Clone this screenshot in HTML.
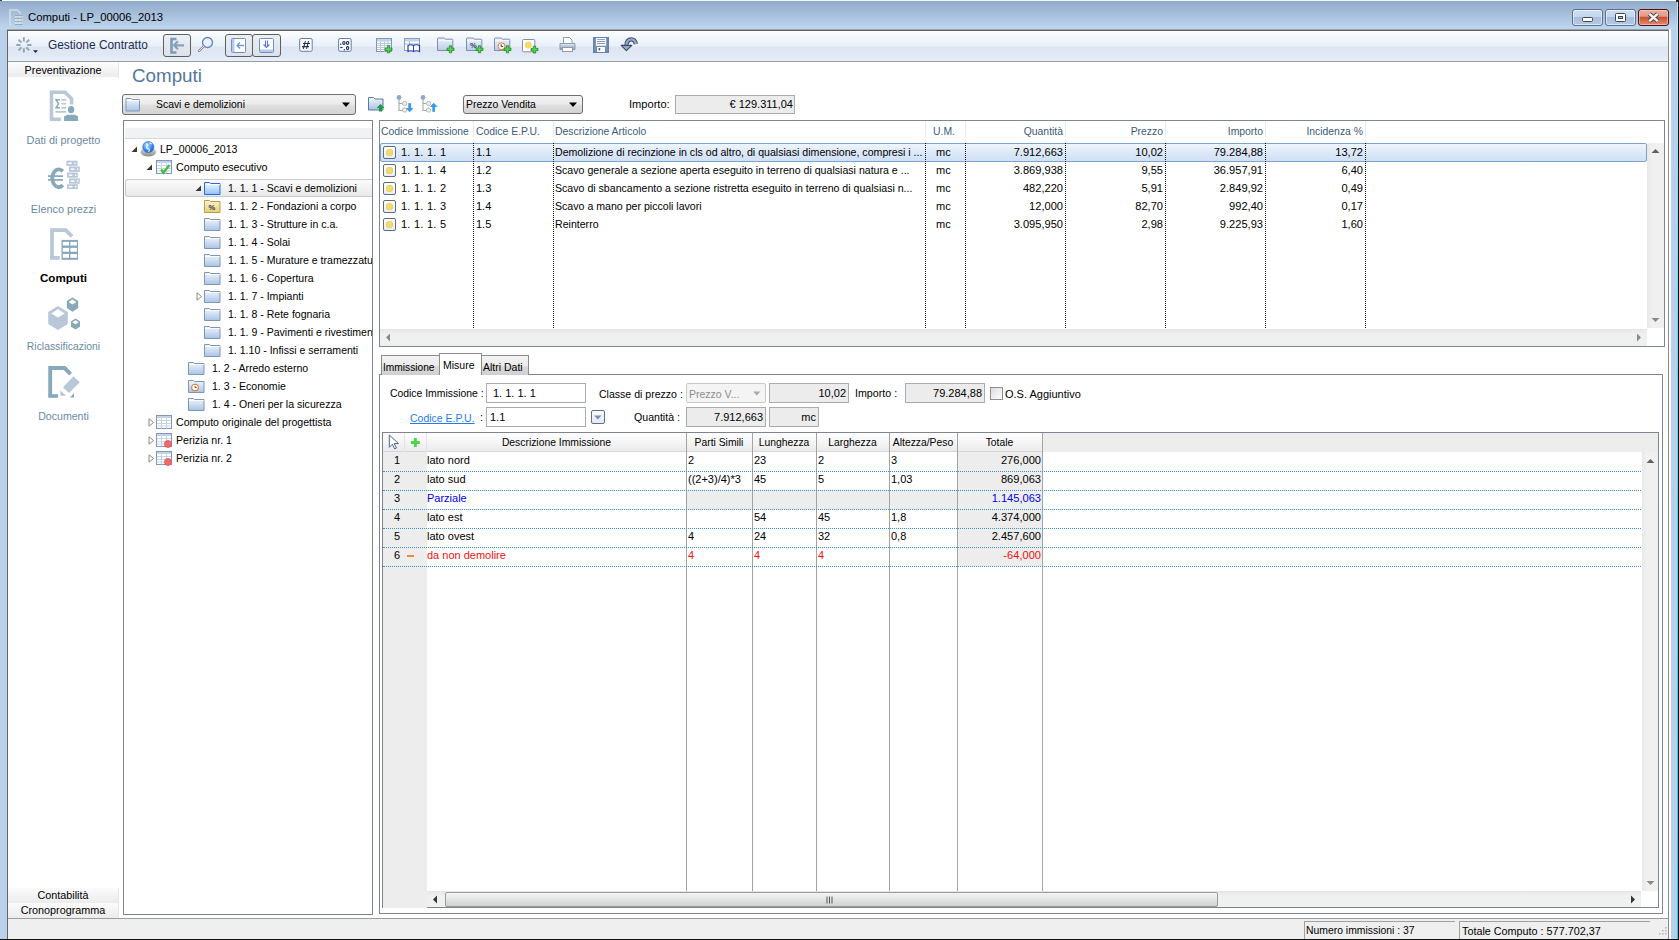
<!DOCTYPE html>
<html><head><meta charset="utf-8">
<style>
*{margin:0;padding:0;box-sizing:border-box}
html,body{width:1679px;height:940px;overflow:hidden;background:#b9d1ea;font-family:"Liberation Sans",sans-serif;font-size:10.5px;color:#000}
.a{position:absolute}
.t{position:absolute;white-space:nowrap;line-height:14px}
svg{position:absolute;overflow:visible}
#title{left:0;top:0;width:1679px;height:30px;background:linear-gradient(#f4f6f8 0,#f4f6f8 1px,#8eaaca 1px,#98b2cf 6px,#a6bfda 14px,#b4cbe5 22px,#bed5ee 28px)}
#client{left:7px;top:29px;width:1662px;height:910px;background:#fff;border-left:1px solid #666;border-top:2px solid #626262;border-right:1px solid #8c8c8c}
#toolbar{left:8px;top:31px;width:1660px;height:31px;background:linear-gradient(#fdfeff 0,#f1f6fc 8px,#eaf0f9 15px,#dde6f2 16px,#dfe8f3 24px,#e7eff9 29px);border-bottom:1px solid #9c9c9c}
.tbtn{position:absolute;top:34px;height:23px;border:1px solid #5c5f63;border-radius:3px;background:linear-gradient(#eceff3,#dde2e8)}
.navhdr{position:absolute;left:8px;width:110px;height:14px;background:linear-gradient(#fbfbfb,#ececec);text-align:center;line-height:14px;font-size:10.8px}
.navlbl{position:absolute;left:8px;width:111px;text-align:center;color:#6c8aa2;font-size:10.9px;line-height:14px}
.panel{position:absolute;border:1px solid #7f858d;background:#fff}
.hd{color:#405a78}
.dv{position:absolute;width:1px;border-left:1px dotted #111}
.ic{position:absolute;width:13px;height:13px;border:1px solid #5a6b82;border-radius:2px;background:linear-gradient(#fff,#e9edf2)}
.ic:after{content:"";position:absolute;left:2px;top:2px;width:7px;height:7px;border-radius:50%;background:#f0dc6e;box-shadow:0 0 0 0.6px #e6cc55 inset}
.fld{position:absolute;border:1px solid #a9abae;background:#ececec;text-align:right;padding-right:2px;line-height:19px;font-size:11px}
.inp{position:absolute;border:1px solid #a9abae;background:#fff;line-height:17px;font-size:11px}
.gl{position:absolute;width:1px;background:#a3a3a3}
.dl{position:absolute;height:1px;border-top:1px dotted #3a8fd9}
.gc{position:absolute;background:#ededed}
.r{text-align:right}
</style></head><body>
<div id="title" class="a"></div>
<!-- title icon -->
<svg style="left:9px;top:9px" width="16" height="17" viewBox="0 0 16 17"><path d="M1 15.5V1h7.5l3.5 3.5" fill="none" stroke="#d3dbe5" stroke-width="1.7"/><path d="M0.2 14.7h2.3v1.8H0.2z" fill="#d3dbe5"/><rect x="6" y="5.6" width="7.8" height="10" fill="#d9e3ec"/><path d="M6 6.4h7.8M6 9.4h7.8M6 12.5h7.8M6 15.5h7.8" stroke="#90aab7" stroke-width="1.1"/><path d="M9 7v8M12.5 7v8" stroke="#b5c8d4" stroke-width="0.8"/></svg>
<div class="t" style="left:28px;top:10px;font-size:11.3px;color:#000">Computi - LP_00006_2013</div>
<!-- title buttons -->
<div class="a" style="left:1572px;top:9px;width:31px;height:17px;border:1px solid #5c7090;border-radius:3px;background:linear-gradient(#cddff2 0,#c3d6ec 44%,#a7bfdc 50%,#b3cae4 100%);box-shadow:inset 0 0 0 1px rgba(255,255,255,0.55)"></div>
<div class="a" style="left:1582px;top:17px;width:11px;height:5px;background:#fff;border:1px solid #3f4650;border-radius:1.5px"></div>
<div class="a" style="left:1605px;top:9px;width:31px;height:17px;border:1px solid #5c7090;border-radius:3px;background:linear-gradient(#cddff2 0,#c3d6ec 44%,#a7bfdc 50%,#b3cae4 100%);box-shadow:inset 0 0 0 1px rgba(255,255,255,0.55)"></div>
<div class="a" style="left:1615px;top:13px;width:11px;height:9px;background:#fff;border:1px solid #3f4650;border-radius:1.5px"></div>
<div class="a" style="left:1618px;top:16px;width:5px;height:3px;background:#a9c4e2;border:1px solid #3f4650"></div>
<div class="a" style="left:1638px;top:9px;width:31px;height:17px;border:1px solid #4a1418;border-radius:3px;background:linear-gradient(#eeb0a0 0,#e39884 42%,#c65230 48%,#d0603f 62%,#e38e78 100%);box-shadow:inset 0 0 0 1px rgba(255,220,210,0.5)"></div>
<svg style="left:1647px;top:12px" width="13" height="11" viewBox="0 0 13 11"><path d="M2.3 1.8L10.7 9.2M10.7 1.8L2.3 9.2" stroke="#4a4a55" stroke-width="4.2"/><path d="M2.3 1.8L10.7 9.2M10.7 1.8L2.3 9.2" stroke="#f4f4f4" stroke-width="2.4"/></svg>

<div id="client" class="a"></div>
<div class="a" style="left:7px;top:29px;width:1662px;height:1px;background:#98a4b2"></div>
<div class="a" style="left:1669px;top:29px;width:2px;height:910px;background:#fff"></div>
<div class="a" style="left:1671px;top:29px;width:6px;height:910px;background:#b8d0e9"></div>
<div class="a" style="left:1677px;top:2px;width:1px;height:937px;background:linear-gradient(#c7e6f7,#5fd3f5 40%,#2fc6f2)"></div>
<div class="a" style="left:1678px;top:2px;width:1px;height:938px;background:#111"></div>
<div class="a" style="left:1676px;top:0;width:3px;height:2px;background:#222"></div>
<div class="a" style="left:0;top:0;width:2px;height:1px;background:#444"></div>
<div class="a" style="left:0;top:939px;width:1679px;height:1px;background:#111"></div>
<div id="toolbar" class="a"></div>
<!-- toolbar content -->
<svg style="left:14px;top:36px" width="26" height="20" viewBox="0 0 26 20"><path d="M13.25 8.96L17.45 8.96M12.25 11.36L15.22 14.33M9.85 12.36L9.85 16.56M7.45 11.36L4.48 14.33M6.45 8.96L2.25 8.96M7.45 6.56L4.48 3.59M9.85 5.56L9.85 1.36M12.25 6.56L15.22 3.59" stroke="#8fa7b5" stroke-width="1.9"/><path d="M19 14.2h5l-2.5 2.8z" fill="#1a2a48"/></svg>
<div class="t" style="left:48px;top:38px;font-size:11.9px;color:#1c2d55">Gestione Contratto</div>
<div class="tbtn" style="left:163px;width:28px"></div>
<svg style="left:170px;top:38px" width="16" height="16" viewBox="0 0 16 16"><path d="M6.5 1H1.5v13.5h5" fill="none" stroke="#7e9ab9" stroke-width="2.6"/><path d="M4 7.3h10M8 3.3L4 7.3l4 4" fill="none" stroke="#86a0bf" stroke-width="2.2"/></svg>
<svg style="left:197px;top:36px" width="18" height="18" viewBox="0 0 18 18"><circle cx="10.5" cy="6.5" r="5" fill="#eef3fb" stroke="#5f84c4" stroke-width="1.3"/><path d="M7 10L2 15" stroke="#8a8a8a" stroke-width="2.4" stroke-linecap="round"/><path d="M7 10L2 15" stroke="#e8e8e8" stroke-width="1" stroke-linecap="round"/></svg>
<div class="tbtn" style="left:225px;width:28px"></div>
<div class="tbtn" style="left:252px;width:29px"></div>
<svg style="left:231px;top:38px" width="16" height="16" viewBox="0 0 16 16"><rect x="0.5" y="0.5" width="14" height="14" rx="1" fill="#fff" stroke="#6f8fc6"/><rect x="1" y="1" width="2.5" height="13" fill="#b8c9ee"/><path d="M5.5 7.5h7.5M9 4.5l-3 3 3 3" fill="none" stroke="#7c96d6" stroke-width="1.3"/></svg>
<svg style="left:259px;top:38px" width="16" height="16" viewBox="0 0 16 16"><rect x="0.5" y="0.5" width="14" height="14" rx="1" fill="#fff" stroke="#6f8fc6"/><rect x="1" y="11.5" width="13" height="2.5" fill="#b8c9ee"/><path d="M6.5 2.5v6M8.5 2.5v6M4.5 6.5l3 3 3-3" fill="none" stroke="#5b78cc" stroke-width="1.1"/></svg>
<svg style="left:298px;top:37px" width="16" height="16" viewBox="0 0 16 16"><rect x="1.7" y="1.5" width="12.5" height="12.8" rx="1.5" fill="#fff" stroke="#5e7db3"/><path d="M7.4 4.2L5.3 11.9M10.5 4.2L8.5 11.9M4.9 6.5H12M4 9.6H11" stroke="#252f5a" stroke-width="1.1"/></svg>
<svg style="left:337px;top:37px" width="16" height="16" viewBox="0 0 16 16"><rect x="1.6" y="1.5" width="12.6" height="12.8" rx="1.5" fill="#fff" stroke="#5e7db3"/><g fill="none" stroke="#252f5a" stroke-width="1.15"><ellipse cx="6.9" cy="5.9" rx="1.15" ry="1.45"/><ellipse cx="10.6" cy="5.9" rx="1.15" ry="1.45"/><ellipse cx="10.6" cy="11.1" rx="1.15" ry="1.5"/><path d="M3.2 10.5h2.4"/></g><g fill="#252f5a"><circle cx="3.7" cy="7.3" r="0.75"/><circle cx="7.3" cy="12.7" r="0.75"/></g></svg>
<!-- table+ -->
<svg style="left:375px;top:37px" width="19" height="17" viewBox="0 0 19 17"><rect x="1.5" y="1.5" width="15" height="13" fill="#fff" stroke="#8398b6"/><rect x="2" y="2" width="14" height="2.6" fill="#c2d4ea"/><path d="M2 6.5h14M2 8.5h14M2 10.5h14M2 12.5h14M5.5 4.6v10M9.5 4.6v10M13 4.6v10" stroke="#b4c4da" stroke-width="0.9"/><path d="M12.35 8.80h2.30v2.35h2.35v2.30h-2.35v2.35h-2.30v-2.35h-2.35v-2.30h2.35z" fill="#55d455" stroke="#138013" stroke-width="0.7"/></svg>
<svg style="left:404px;top:37px" width="18" height="17" viewBox="0 0 18 17"><rect x="0.5" y="1.5" width="15" height="12" fill="#fff" stroke="#8aa0bd"/><rect x="1" y="2" width="14" height="2.5" fill="#c5d3e6"/><path d="M1 7h14M5.5 4.5v9" stroke="#9bb0ca"/><path d="M4 8.5q3-1.5 5.5 0q2.5-1.5 6 0v6q-3.5-1.5-6 0q-2.5-1.5-5.5 0z" fill="#fff" stroke="#2a3fb0" stroke-width="1.2"/><path d="M9.5 8.5v6" stroke="#2a3fb0"/></svg>
<!-- folder+ -->
<svg style="left:437px;top:37px" width="19" height="17" viewBox="0 0 19 17"><path d="M0.5 13.5V1.6Q0.5 1 1.2 1H7.3L8.3 2.2H15.3Q15.8 2.2 15.8 2.8V13.5z" fill="url(#fg)" stroke="#7d8fae"/><path d="M1 3.6h14.3" stroke="#fff" stroke-width="0.8"/><path d="M12.35 8.80h2.30v2.35h2.35v2.30h-2.35v2.35h-2.30v-2.35h-2.35v-2.30h2.35z" fill="#55d455" stroke="#138013" stroke-width="0.7" stroke-linejoin="miter"/></svg>
<svg style="left:466px;top:37px" width="19" height="17" viewBox="0 0 19 17"><path d="M0.5 13.5V1.6Q0.5 1 1.2 1H7.3L8.3 2.2H15.3Q15.8 2.2 15.8 2.8V13.5z" fill="url(#fg)" stroke="#7d8fae"/><path d="M1 3.6h14.3" stroke="#fff" stroke-width="0.8"/><text x="4" y="11.2" font-size="7.5" font-weight="bold" font-family="Liberation Sans" fill="#333a66">%</text><path d="M12.35 8.80h2.30v2.35h2.35v2.30h-2.35v2.35h-2.30v-2.35h-2.35v-2.30h2.35z" fill="#55d455" stroke="#138013" stroke-width="0.7" stroke-linejoin="miter"/></svg>
<svg style="left:494px;top:37px" width="19" height="17" viewBox="0 0 19 17"><path d="M0.5 13.5V1.6Q0.5 1 1.2 1H7.3L8.3 2.2H15.3Q15.8 2.2 15.8 2.8V13.5z" fill="url(#fg)" stroke="#7d8fae"/><path d="M1 3.6h14.3" stroke="#fff" stroke-width="0.8"/><circle cx="7.5" cy="9.3" r="3.5" fill="#fff" stroke="#e8782a" stroke-width="1"/><path d="M7.2 7.3v2.3h2" fill="none" stroke="#222" stroke-width="0.9"/><path d="M12.35 8.80h2.30v2.35h2.35v2.30h-2.35v2.35h-2.30v-2.35h-2.35v-2.30h2.35z" fill="#55d455" stroke="#138013" stroke-width="0.7" stroke-linejoin="miter"/></svg>
<svg style="left:521px;top:38px" width="19" height="17" viewBox="0 0 19 17"><rect x="1.5" y="1.5" width="12.3" height="12.3" rx="1" fill="#fff" stroke="#8090ab"/><circle cx="7.3" cy="7" r="3.5" fill="#f1dc6a"/><path d="M12.35 8.10h2.30v2.35h2.35v2.30h-2.35v2.35h-2.30v-2.35h-2.35v-2.30h2.35z" fill="#55d455" stroke="#138013" stroke-width="0.7" stroke-linejoin="miter"/></svg>
<!-- printer -->
<svg style="left:559px;top:37px" width="18" height="16" viewBox="0 0 18 16"><path d="M4.5 0.5h6l2.5 2.5v4h-8.5z" fill="#fff" stroke="#8d9bb0"/><path d="M1 6.5h15v6h-15z" fill="url(#pg)" stroke="#8d9bb0"/><rect x="3.5" y="10.5" width="10" height="4" fill="#fff" stroke="#8d9bb0"/></svg>
<!-- floppy -->
<svg style="left:593px;top:37px" width="17" height="17" viewBox="0 0 17 17"><rect x="0.5" y="0.5" width="15" height="15" fill="#8c99b3" stroke="#6583b3"/><rect x="1" y="1" width="14" height="14" fill="none" stroke="#6583b3" stroke-width="1.6"/><rect x="3" y="1" width="10" height="7.7" fill="#fff"/><path d="M4 2.4h8M4 4.5h8M4 6.5h8" stroke="#6583b3" stroke-width="0.8"/><rect x="3" y="9.5" width="10" height="6" fill="#6583b3"/><rect x="4" y="10" width="8" height="5" fill="#fff"/><rect x="5.6" y="11" width="1.6" height="2.4" fill="#3f55b8"/></svg>
<!-- undo -->
<svg style="left:620px;top:37px" width="18" height="16" viewBox="0 0 18 16"><path d="M6.3 9Q6.5 2.4 11.5 2.4Q14.8 2.4 16 7" fill="none" stroke="#3d4a66" stroke-width="4.2"/><path d="M6.3 9Q6.5 2.4 11.5 2.4Q14.8 2.4 16 7" fill="none" stroke="#90a9c8" stroke-width="2.4"/><path d="M1.2 8.4h10.6L6.4 13.7z" fill="#90a9c8" stroke="#3d4a66" stroke-width="1.1" stroke-linejoin="round"/></svg>
<svg width="0" height="0" style="position:absolute"><defs>
<linearGradient id="fg" x1="0" y1="0" x2="0" y2="1"><stop offset="0" stop-color="#eef3fa"/><stop offset="1" stop-color="#b9cde6"/></linearGradient>
<linearGradient id="pg" x1="0" y1="0" x2="0" y2="1"><stop offset="0" stop-color="#e9eef5"/><stop offset="1" stop-color="#8795ab"/></linearGradient>
</defs></svg>
<!-- nav -->
<div class="navhdr" style="top:63px">Preventivazione</div>
<div class="a" style="left:118px;top:62px;width:1px;height:16px;background:#e6e6e6"></div>
<svg style="left:40px;top:84px" width="48" height="42" viewBox="0 0 48 42">
<path d="M11.5 35.3V8.15H25l6.6 6.6v5.85" fill="none" stroke="#b9c8d9" stroke-width="3.5"/><path d="M9.8 33.5h11.1v3.6H9.8z" fill="#b9c8d9"/>
<path d="M20 15.8h-4l2.6 4-2.6 4h4" fill="none" stroke="#88a9bb" stroke-width="1.5"/>
<path d="M21.5 15.9h4.6M21.5 19.7h4.6M21.5 23.9h4.6M15.4 27.9h10.7" stroke="#b9c8d9" stroke-width="1.6"/>
<ellipse cx="31.1" cy="25.6" rx="3.2" ry="3.6" fill="#88a9bb"/><path d="M24.1 37.1v-4.8l3.5-1.6h7l3.4 1.6v4.8z" fill="#88a9bb"/></svg>
<div class="navlbl" style="top:133px">Dati di progetto</div>
<svg style="left:40px;top:154px" width="48" height="42" viewBox="0 0 48 42"><path d="M22.8 17.3A6.5 8.85 0 1 0 22.8 31.2" fill="none" stroke="#88a9bb" stroke-width="3.9"/><path d="M8 22.1h15M8 25.9h15" stroke="#88a9bb" stroke-width="1.6"/><g fill="#b9c8d9"><rect x="26.4" y="6.7" width="11.1" height="5.1"/><rect x="29.0" y="12.5" width="10.8" height="5.4"/><rect x="27.0" y="18.5" width="10.8" height="5.2"/><rect x="29.0" y="24.4" width="10.8" height="5.3"/><rect x="27.0" y="30.2" width="10.8" height="4.9"/></g><g fill="#fff"><rect x="28.2" y="8.5" width="3.6" height="1.5"/><rect x="34.4" y="8.5" width="1.3" height="1.5"/><rect x="30.8" y="14.4" width="3.6" height="1.5"/><rect x="37.0" y="14.4" width="1.3" height="1.5"/><rect x="28.8" y="20.4" width="3.6" height="1.5"/><rect x="35.0" y="20.4" width="1.3" height="1.5"/><rect x="30.8" y="26.3" width="3.6" height="1.5"/><rect x="37.0" y="26.3" width="1.3" height="1.5"/><rect x="28.8" y="31.9" width="3.6" height="1.5"/><rect x="35.0" y="31.9" width="1.3" height="1.5"/></g></svg>
<div class="navlbl" style="top:202px">Elenco prezzi</div>
<svg style="left:40px;top:222px" width="48" height="42" viewBox="0 0 48 42"><path d="M12 36V8.15h13.7l6.4 6.3" fill="none" stroke="#b9c8d9" stroke-width="3.8"/><path d="M10.1 34h9.6v3.8h-9.6z" fill="#b9c8d9"/><rect x="21.5" y="17.9" width="16.5" height="19.9" fill="#88a9bb"/><g fill="#fff"><rect x="22.8" y="19.9" width="6.2" height="3.6"/><rect x="30.4" y="19.9" width="6.5" height="3.6"/><rect x="22.8" y="25.9" width="6.2" height="3.8"/><rect x="30.4" y="25.9" width="6.5" height="3.8"/><rect x="22.8" y="32" width="6.2" height="3.8"/><rect x="30.4" y="32" width="6.5" height="3.8"/></g></svg>
<div class="navlbl" style="top:271px;color:#000;font-weight:bold;font-size:11.6px">Computi</div>
<svg style="left:48px;top:296.5px" width="34" height="34" viewBox="0 0 34 34">
<path d="M10 9l9.8 6v12L10 33 0.2 27V15z" fill="#b9c8d9"/><path d="M10 12.2l6.8 4.2-6.8 4.2-6.8-4.2z" fill="#fff"/>
<path d="M24.5 0.5l5.7 3.6v7L24.5 14.7l-5.7-3.6v-7z" fill="#88a9bb"/><path d="M24.5 2.6l3.8 2.4-3.8 2.4-3.8-2.4z" fill="#fff"/>
<path d="M27.5 21.5l4.5 2.8v5.5L27.5 32.6 23 29.8v-5.5z" fill="#88a9bb"/><path d="M27.5 23.2l3.2 2-3.2 2-3.2-2z" fill="#fff"/></svg>
<div class="navlbl" style="top:340px;font-size:10.4px">Riclassificazioni</div>
<svg style="left:40px;top:360px" width="48" height="42" viewBox="0 0 48 42"><path d="M10.2 36V8.05h14.4l6 6" fill="none" stroke="#88a9bb" stroke-width="3.9"/><path d="M8.27 34.2h9.8v3.6H8.27z" fill="#88a9bb"/><path d="M23 27.3l10.5-11 6.3 6-10.8 10.8z" fill="#b9c8d9"/><path d="M20.3 30.2v5.6h5.8z" fill="#b9c8d9"/><path d="M29.9 37.5l4.1-4.4v4.4z" fill="#88a9bb"/></svg>
<div class="navlbl" style="top:409px;font-size:10.6px">Documenti</div>
<div class="navhdr" style="top:888px;height:15px;line-height:15px">Contabilità</div>
<div class="navhdr" style="top:903px;height:15px;line-height:15px">Cronoprogramma</div>
<div class="a" style="left:118px;top:888px;width:1px;height:30px;background:#e6e6e6"></div>

<div class="t" style="left:132px;top:64px;font-size:18.8px;line-height:24px;color:#52779a">Computi</div>

<!-- combo -->
<div class="a" style="left:122px;top:94px;width:234px;height:21px;border:1px solid #6f6f6f;border-radius:3px;background:linear-gradient(#f3f3f3 0,#ececec 45%,#dfdfdf 55%,#d3d3d3 100%)"></div>
<svg style="left:125px;top:97px" width="16" height="15" viewBox="0 0 16 15"><path d="M1 1.5h5l1 1h7.5v11.5H1z" fill="url(#fb)" stroke="#7f98bf"/><path d="M1.5 3.5h13" stroke="#fff" stroke-width="0.9"/></svg>
<div class="t" style="left:156px;top:98px;font-size:10.4px">Scavi e demolizioni</div>
<svg style="left:342px;top:102px" width="9" height="6" viewBox="0 0 9 6"><path d="M0 0.5h8l-4 4.5z" fill="#000"/></svg>
<svg style="left:368px;top:95px" width="17" height="17" viewBox="0 0 17 17"><path d="M0.5 2.5h5l1.5 1.5h8v11h-14.5z" fill="url(#fb)" stroke="#5f7897"/><path d="M12.5 9l-4 4h2.5v3.5h3v-3.5h2.5z" fill="#1e9a4c"/></svg>
<svg style="left:396px;top:95px" width="17" height="17" viewBox="0 0 17 17"><circle cx="3" cy="2.5" r="2.4" fill="#8ea7c8"/><path d="M3 5v10.5h3.5M3 8.5h3.5" fill="none" stroke="#a6a6a6" stroke-width="1.1"/><circle cx="8.5" cy="8.5" r="2.2" fill="#eee" stroke="#aaa" stroke-width="0.8"/><circle cx="8.5" cy="15" r="2.2" fill="#eee" stroke="#aaa" stroke-width="0.8"/><path d="M12.7 8.5v5h-2.2l3.2 3.3 3.2-3.3h-2.2v-5z" fill="#28a5ea" stroke="#1a6bd0" stroke-width="0.5"/></svg>
<svg style="left:420px;top:95px" width="17" height="17" viewBox="0 0 17 17"><circle cx="3" cy="2.5" r="2.4" fill="#8ea7c8"/><path d="M3 5v10.5h3.5M3 8.5h3.5" fill="none" stroke="#a6a6a6" stroke-width="1.1"/><circle cx="8.5" cy="8.5" r="2.2" fill="#eee" stroke="#aaa" stroke-width="0.8"/><circle cx="8.5" cy="15" r="2.2" fill="#eee" stroke="#aaa" stroke-width="0.8"/><path d="M12.7 16.5v-5h-2.2l3.2-3.3 3.2 3.3h-2.2v5z" fill="#28a5ea" stroke="#1a6bd0" stroke-width="0.5"/></svg>
<!-- prezzo vendita combo -->
<div class="a" style="left:463px;top:95px;width:120px;height:19px;border:1px solid #6f6f6f;border-radius:3px;background:linear-gradient(#f3f3f3 0,#ececec 45%,#dfdfdf 55%,#d3d3d3 100%)"></div>
<div class="t" style="left:466px;top:98px;font-size:10.4px">Prezzo Vendita</div>
<svg style="left:569px;top:102px" width="9" height="6" viewBox="0 0 9 6"><path d="M0 0.5h8l-4 4.5z" fill="#000"/></svg>
<div class="t" style="left:629px;top:97px;font-size:11.1px">Importo:</div>
<div class="fld" style="left:675px;top:95px;width:120px;height:19px;padding-right:1px;line-height:17px">&euro; 129.311,04</div>
<svg width="0" height="0" style="position:absolute"><defs>
<linearGradient id="fb" x1="0" y1="0" x2="0" y2="1"><stop offset="0" stop-color="#f2f6fc"/><stop offset="1" stop-color="#a9c3e6"/></linearGradient>
<linearGradient id="fy" x1="0" y1="0" x2="0" y2="1"><stop offset="0" stop-color="#fdf4c8"/><stop offset="1" stop-color="#e6cf79"/></linearGradient>
</defs></svg>
<!-- tree panel -->
<div class="panel" style="left:123px;top:120px;width:250px;height:795px;overflow:hidden">
<div class="a" style="left:1px;top:7px;width:247px;height:11px;background:#f1f2f4;border-bottom:1px solid #d9d9d9"></div>
</div>
<div class="a" style="left:125px;top:179px;width:247px;height:18px;border:1px solid #c9c9c9;border-right:none;border-radius:3px 0 0 3px;background:linear-gradient(#fbfbfb,#e9e9e9)"></div>
<svg style="left:131px;top:146px" width="7" height="7" viewBox="0 0 7 7"><path d="M6 0.5V6H0.5z" fill="#3a3a3a"/></svg>
<svg style="left:140px;top:140px" width="17" height="17" viewBox="0 0 17 17"><ellipse cx="8.3" cy="12" rx="7.8" ry="4.6" fill="url(#gb)"/><circle cx="8.3" cy="7" r="5.6" fill="url(#gl)" stroke="#2c6bd1" stroke-width="0.6"/><path d="M6 3.5q2 1 1 3t2 2.5q1 1-0.5 3M9.5 2.5q1 1.5 2.8 1.5" fill="none" stroke="#fff" stroke-width="1.1"/></svg>
<div class="t" style="left:160px;top:142px;font-size:10.56px">LP_00006_2013</div>
<svg style="left:146px;top:164px" width="7" height="7" viewBox="0 0 7 7"><path d="M6 0.5V6H0.5z" fill="#3a3a3a"/></svg>
<svg style="left:156px;top:160px" width="17" height="15" viewBox="0 0 17 15"><rect x="0.5" y="0.5" width="15" height="13" fill="#fff" stroke="#7f98be"/><rect x="1" y="1" width="14" height="2" fill="#c3d3ea"/><path d="M1 5.5h14M1 8.5h14M1 11h14M5.5 3v10.5M10.5 3v10.5" stroke="#c3d0e3" stroke-width="0.9"/><path d="M5 9.5l2.5 3 6-7.5" fill="none" stroke="#3cc23c" stroke-width="2.4"/></svg>
<div class="t" style="left:176px;top:160px;font-size:10.7px">Computo esecutivo</div>
<svg style="left:195px;top:185px" width="7" height="7" viewBox="0 0 7 7"><path d="M6 0.5V6H0.5z" fill="#3a3a3a"/></svg>
<svg style="left:204px;top:181px" width="17" height="14" viewBox="0 0 17 14"><path d="M0.5 1.5h5l1 1h9.5v11H0.5z" fill="url(#fsel)" stroke="#2a68e0"/><path d="M1 3.5h15" stroke="#fff" stroke-width="0.8"/></svg>
<div class="t" style="left:228px;top:181px;font-size:10.55px">1. 1. 1 - Scavi e demolizioni</div>
<svg style="left:204px;top:199px" width="17" height="14" viewBox="0 0 17 14"><path d="M0.5 1.5h5l1 1h9.5v11H0.5z" fill="url(#fy)" stroke="#b79b4a"/><text x="4.5" y="11" font-size="7.5" font-weight="bold" font-family="Liberation Sans" fill="#2a3550">%</text></svg>
<div class="t" style="left:228px;top:199px;font-size:10.55px">1. 1. 2 - Fondazioni a corpo</div>
<svg style="left:204px;top:217px" width="17" height="14" viewBox="0 0 17 14"><path d="M0.5 1.5h5l1 1h9.5v11H0.5z" fill="url(#fb)" stroke="#7f95b5"/><path d="M1 3.5h15" stroke="#fff" stroke-width="0.8"/></svg>
<div class="t" style="left:228px;top:217px;font-size:10.55px">1. 1. 3 - Strutture in c.a.</div>
<svg style="left:204px;top:235px" width="17" height="14" viewBox="0 0 17 14"><path d="M0.5 1.5h5l1 1h9.5v11H0.5z" fill="url(#fb)" stroke="#7f95b5"/><path d="M1 3.5h15" stroke="#fff" stroke-width="0.8"/></svg>
<div class="t" style="left:228px;top:235px;font-size:10.55px">1. 1. 4 - Solai</div>
<svg style="left:204px;top:253px" width="17" height="14" viewBox="0 0 17 14"><path d="M0.5 1.5h5l1 1h9.5v11H0.5z" fill="url(#fb)" stroke="#7f95b5"/><path d="M1 3.5h15" stroke="#fff" stroke-width="0.8"/></svg>
<div class="t" style="left:228px;top:253px;font-size:10.55px;width:144px;overflow:hidden">1. 1. 5 - Murature e tramezzature</div>
<svg style="left:204px;top:271px" width="17" height="14" viewBox="0 0 17 14"><path d="M0.5 1.5h5l1 1h9.5v11H0.5z" fill="url(#fb)" stroke="#7f95b5"/><path d="M1 3.5h15" stroke="#fff" stroke-width="0.8"/></svg>
<div class="t" style="left:228px;top:271px;font-size:10.55px">1. 1. 6 - Copertura</div>
<svg style="left:204px;top:289px" width="17" height="14" viewBox="0 0 17 14"><path d="M0.5 1.5h5l1 1h9.5v11H0.5z" fill="url(#fb)" stroke="#7f95b5"/><path d="M1 3.5h15" stroke="#fff" stroke-width="0.8"/></svg>
<svg style="left:196px;top:292px" width="7" height="9" viewBox="0 0 7 9"><path d="M1 0.8L5.5 4.5 1 8.2z" fill="#fff" stroke="#8a8a8a"/></svg>
<div class="t" style="left:228px;top:289px;font-size:10.55px">1. 1. 7 - Impianti</div>
<svg style="left:204px;top:307px" width="17" height="14" viewBox="0 0 17 14"><path d="M0.5 1.5h5l1 1h9.5v11H0.5z" fill="url(#fb)" stroke="#7f95b5"/><path d="M1 3.5h15" stroke="#fff" stroke-width="0.8"/></svg>
<div class="t" style="left:228px;top:307px;font-size:10.55px">1. 1. 8 - Rete fognaria</div>
<svg style="left:204px;top:325px" width="17" height="14" viewBox="0 0 17 14"><path d="M0.5 1.5h5l1 1h9.5v11H0.5z" fill="url(#fb)" stroke="#7f95b5"/><path d="M1 3.5h15" stroke="#fff" stroke-width="0.8"/></svg>
<div class="t" style="left:228px;top:325px;font-size:10.55px;width:144px;overflow:hidden">1. 1. 9 - Pavimenti e rivestimenti</div>
<svg style="left:204px;top:343px" width="17" height="14" viewBox="0 0 17 14"><path d="M0.5 1.5h5l1 1h9.5v11H0.5z" fill="url(#fb)" stroke="#7f95b5"/><path d="M1 3.5h15" stroke="#fff" stroke-width="0.8"/></svg>
<div class="t" style="left:228px;top:343px;font-size:10.55px">1. 1.10 - Infissi e serramenti</div>
<svg style="left:188px;top:361px" width="17" height="14" viewBox="0 0 17 14"><path d="M0.5 1.5h5l1 1h9.5v11H0.5z" fill="url(#fb)" stroke="#7f95b5"/><path d="M1 3.5h15" stroke="#fff" stroke-width="0.8"/></svg>
<div class="t" style="left:212px;top:361px;font-size:10.55px">1. 2 - Arredo esterno</div>
<svg style="left:188px;top:379px" width="17" height="14" viewBox="0 0 17 14"><path d="M0.5 1.5h5l1 1h9.5v11H0.5z" fill="url(#fb)" stroke="#7f95b5"/><circle cx="7" cy="8.5" r="3.3" fill="#fff" stroke="#e07b2c" stroke-width="1.1"/><path d="M7 6.8v1.8h1.8" fill="none" stroke="#333" stroke-width="0.8"/></svg>
<div class="t" style="left:212px;top:379px;font-size:10.55px">1. 3 - Economie</div>
<svg style="left:188px;top:397px" width="17" height="14" viewBox="0 0 17 14"><path d="M0.5 1.5h5l1 1h9.5v11H0.5z" fill="url(#fb)" stroke="#7f95b5"/><path d="M1 3.5h15" stroke="#fff" stroke-width="0.8"/></svg>
<div class="t" style="left:212px;top:397px;font-size:10.55px">1. 4 - Oneri per la sicurezza</div>
<svg style="left:148px;top:418px" width="7" height="9" viewBox="0 0 7 9"><path d="M1 0.8L5.5 4.5 1 8.2z" fill="#fff" stroke="#8a8a8a"/></svg>
<svg style="left:156px;top:415px" width="17" height="15" viewBox="0 0 17 15"><rect x="0.5" y="0.5" width="15" height="13" fill="#fff" stroke="#7f98be"/><rect x="1" y="1" width="14" height="2" fill="#c3d3ea"/><path d="M1 5.5h14M1 8.5h14M1 11h14M5.5 3v10.5M10.5 3v10.5" stroke="#c3d0e3" stroke-width="0.9"/></svg>
<div class="t" style="left:176px;top:415px;font-size:10.6px">Computo originale del progettista</div>
<svg style="left:148px;top:436px" width="7" height="9" viewBox="0 0 7 9"><path d="M1 0.8L5.5 4.5 1 8.2z" fill="#fff" stroke="#8a8a8a"/></svg>
<svg style="left:156px;top:433px" width="17" height="15" viewBox="0 0 17 15"><rect x="0.5" y="0.5" width="15" height="13" fill="#fff" stroke="#7f98be"/><rect x="1" y="1" width="14" height="2" fill="#c3d3ea"/><path d="M1 5.5h14M1 8.5h14M1 11h14M5.5 3v10.5M10.5 3v10.5" stroke="#c3d0e3" stroke-width="0.9"/><circle cx="12" cy="11" r="3.6" fill="#f06a6a" stroke="#d04848" stroke-width="0.6"/></svg>
<div class="t" style="left:176px;top:433px;font-size:10.6px">Perizia nr. 1</div>
<svg style="left:148px;top:454px" width="7" height="9" viewBox="0 0 7 9"><path d="M1 0.8L5.5 4.5 1 8.2z" fill="#fff" stroke="#8a8a8a"/></svg>
<svg style="left:156px;top:451px" width="17" height="15" viewBox="0 0 17 15"><rect x="0.5" y="0.5" width="15" height="13" fill="#fff" stroke="#7f98be"/><rect x="1" y="1" width="14" height="2" fill="#c3d3ea"/><path d="M1 5.5h14M1 8.5h14M1 11h14M5.5 3v10.5M10.5 3v10.5" stroke="#c3d0e3" stroke-width="0.9"/><circle cx="12" cy="11" r="3.6" fill="#f06a6a" stroke="#d04848" stroke-width="0.6"/></svg>
<div class="t" style="left:176px;top:451px;font-size:10.6px">Perizia nr. 2</div>
<svg width="0" height="0" style="position:absolute"><defs>
<linearGradient id="fsel" x1="0" y1="0" x2="0" y2="1"><stop offset="0" stop-color="#f4f9ff"/><stop offset="1" stop-color="#8fc2f7"/></linearGradient>
<linearGradient id="gb" x1="0" y1="0" x2="0" y2="1"><stop offset="0" stop-color="#e0e0e0"/><stop offset="1" stop-color="#8a8a8a"/></linearGradient>
<radialGradient id="gl" cx="0.4" cy="0.35" r="0.7"><stop offset="0" stop-color="#bfe3ff"/><stop offset="0.6" stop-color="#3a8ff0"/><stop offset="1" stop-color="#1f5cc9"/></radialGradient>
</defs></svg>
<!-- top grid -->
<div class="panel" style="left:379px;top:120px;width:1286px;height:227px"></div>
<div class="a" style="left:473px;top:121px;width:1px;height:17px;background:#e3ebf5"></div>
<div class="a" style="left:553px;top:121px;width:1px;height:17px;background:#e3ebf5"></div>
<div class="a" style="left:925px;top:121px;width:1px;height:17px;background:#e3ebf5"></div>
<div class="a" style="left:965px;top:121px;width:1px;height:17px;background:#e3ebf5"></div>
<div class="a" style="left:1065px;top:121px;width:1px;height:17px;background:#e3ebf5"></div>
<div class="a" style="left:1165px;top:121px;width:1px;height:17px;background:#e3ebf5"></div>
<div class="a" style="left:1265px;top:121px;width:1px;height:17px;background:#e3ebf5"></div>
<div class="a" style="left:1365px;top:121px;width:1px;height:17px;background:#e3ebf5"></div>
<div class="t hd" style="left:381px;top:125px;font-size:10.4px">Codice Immissione</div>
<div class="t hd" style="left:476px;top:125px;font-size:10.4px">Codice E.P.U.</div>
<div class="t hd" style="left:555px;top:125px;font-size:10.4px">Descrizione Articolo</div>
<div class="t hd" style="left:933px;top:125px;font-size:10.4px">U.M.</div>
<div class="t hd r" style="left:963px;top:125px;width:100px;font-size:10.4px">Quantità</div>
<div class="t hd r" style="left:1063px;top:125px;width:100px;font-size:10.4px">Prezzo</div>
<div class="t hd r" style="left:1163px;top:125px;width:100px;font-size:10.4px">Importo</div>
<div class="t hd r" style="left:1263px;top:125px;width:100px;font-size:10.4px">Incidenza %</div>
<div class="a" style="left:380px;top:143px;width:1267px;height:19px;border:1px solid #7da2ce;border-radius:2px;background:linear-gradient(#eef5fd 0,#dde9f8 50%,#cfe0f6 100%)"></div>
<div class="dv" style="left:473px;top:143px;height:185px"></div>
<div class="dv" style="left:553px;top:143px;height:185px"></div>
<div class="dv" style="left:925px;top:143px;height:185px"></div>
<div class="dv" style="left:965px;top:143px;height:185px"></div>
<div class="dv" style="left:1065px;top:143px;height:185px"></div>
<div class="dv" style="left:1165px;top:143px;height:185px"></div>
<div class="dv" style="left:1265px;top:143px;height:185px"></div>
<div class="dv" style="left:1365px;top:143px;height:185px"></div>
<div class="ic" style="left:383px;top:146px"></div>
<div class="t" style="left:401px;top:145px;font-size:11px;letter-spacing:0.25px">1. 1. 1. 1</div>
<div class="t" style="left:476px;top:145px;font-size:11px">1.1</div>
<div class="t" style="left:555px;top:145px;font-size:10.6px">Demolizione di recinzione in cls od altro, di qualsiasi dimensione, compresi i ...</div>
<div class="t" style="left:936px;top:145px;font-size:11px">mc</div>
<div class="t r" style="left:973px;top:145px;width:90px;font-size:11.1px">7.912,663</div>
<div class="t r" style="left:1073px;top:145px;width:90px;font-size:11.1px">10,02</div>
<div class="t r" style="left:1173px;top:145px;width:90px;font-size:11.1px">79.284,88</div>
<div class="t r" style="left:1273px;top:145px;width:90px;font-size:11.1px">13,72</div>
<div class="ic" style="left:383px;top:164px"></div>
<div class="t" style="left:401px;top:163px;font-size:11px;letter-spacing:0.25px">1. 1. 1. 4</div>
<div class="t" style="left:476px;top:163px;font-size:11px">1.2</div>
<div class="t" style="left:555px;top:163px;font-size:10.6px">Scavo generale a sezione aperta eseguito in terreno di qualsiasi natura e ...</div>
<div class="t" style="left:936px;top:163px;font-size:11px">mc</div>
<div class="t r" style="left:973px;top:163px;width:90px;font-size:11.1px">3.869,938</div>
<div class="t r" style="left:1073px;top:163px;width:90px;font-size:11.1px">9,55</div>
<div class="t r" style="left:1173px;top:163px;width:90px;font-size:11.1px">36.957,91</div>
<div class="t r" style="left:1273px;top:163px;width:90px;font-size:11.1px">6,40</div>
<div class="ic" style="left:383px;top:182px"></div>
<div class="t" style="left:401px;top:181px;font-size:11px;letter-spacing:0.25px">1. 1. 1. 2</div>
<div class="t" style="left:476px;top:181px;font-size:11px">1.3</div>
<div class="t" style="left:555px;top:181px;font-size:10.6px">Scavo di sbancamento a sezione ristretta eseguito in terreno di qualsiasi n...</div>
<div class="t" style="left:936px;top:181px;font-size:11px">mc</div>
<div class="t r" style="left:973px;top:181px;width:90px;font-size:11.1px">482,220</div>
<div class="t r" style="left:1073px;top:181px;width:90px;font-size:11.1px">5,91</div>
<div class="t r" style="left:1173px;top:181px;width:90px;font-size:11.1px">2.849,92</div>
<div class="t r" style="left:1273px;top:181px;width:90px;font-size:11.1px">0,49</div>
<div class="ic" style="left:383px;top:200px"></div>
<div class="t" style="left:401px;top:199px;font-size:11px;letter-spacing:0.25px">1. 1. 1. 3</div>
<div class="t" style="left:476px;top:199px;font-size:11px">1.4</div>
<div class="t" style="left:555px;top:199px;font-size:10.6px">Scavo a mano per piccoli lavori</div>
<div class="t" style="left:936px;top:199px;font-size:11px">mc</div>
<div class="t r" style="left:973px;top:199px;width:90px;font-size:11.1px">12,000</div>
<div class="t r" style="left:1073px;top:199px;width:90px;font-size:11.1px">82,70</div>
<div class="t r" style="left:1173px;top:199px;width:90px;font-size:11.1px">992,40</div>
<div class="t r" style="left:1273px;top:199px;width:90px;font-size:11.1px">0,17</div>
<div class="ic" style="left:383px;top:218px"></div>
<div class="t" style="left:401px;top:217px;font-size:11px;letter-spacing:0.25px">1. 1. 1. 5</div>
<div class="t" style="left:476px;top:217px;font-size:11px">1.5</div>
<div class="t" style="left:555px;top:217px;font-size:10.6px">Reinterro</div>
<div class="t" style="left:936px;top:217px;font-size:11px">mc</div>
<div class="t r" style="left:973px;top:217px;width:90px;font-size:11.1px">3.095,950</div>
<div class="t r" style="left:1073px;top:217px;width:90px;font-size:11.1px">2,98</div>
<div class="t r" style="left:1173px;top:217px;width:90px;font-size:11.1px">9.225,93</div>
<div class="t r" style="left:1273px;top:217px;width:90px;font-size:11.1px">1,60</div>
<div class="a" style="left:1647px;top:143px;width:17px;height:185px;background:linear-gradient(90deg,#e8e8e8,#f0f0f0 30%,#f0f0f0)"></div>
<svg style="left:1651px;top:148px" width="9" height="6" viewBox="0 0 9 6"><path d="M0.5 5L4.5 1 8.5 5z" fill="#606060"/></svg>
<svg style="left:1651px;top:317px" width="9" height="6" viewBox="0 0 9 6"><path d="M0.5 1L4.5 5 8.5 1z" fill="#8a8a8a"/></svg>
<div class="a" style="left:380px;top:329px;width:1267px;height:17px;background:linear-gradient(#e6e6e6,#f0f0f0 30%,#f0f0f0)"></div>
<svg style="left:385px;top:333px" width="6" height="9" viewBox="0 0 6 9"><path d="M5 0.5L1 4.5 5 8.5z" fill="#8a8a8a"/></svg>
<svg style="left:1636px;top:333px" width="6" height="9" viewBox="0 0 6 9"><path d="M1 0.5L5 4.5 1 8.5z" fill="#8a8a8a"/></svg>
<!-- tabs -->
<div class="panel" style="left:379px;top:374px;width:1284px;height:540px"></div>
<div class="a" style="left:381px;top:355px;width:59px;height:20px;border:1px solid #8b8b8b;border-bottom:none;background:linear-gradient(#f3f3f3 0,#ebebeb 50%,#dcdcdc 51%,#cfcfcf 100%)"></div>
<div class="a" style="left:481px;top:355px;width:48px;height:20px;border:1px solid #8b8b8b;border-bottom:none;background:linear-gradient(#f3f3f3 0,#ebebeb 50%,#dcdcdc 51%,#cfcfcf 100%)"></div>
<div class="a" style="left:439px;top:353px;width:43px;height:22px;border:1px solid #8b8b8b;border-bottom:none;background:#fff"></div>
<div class="t" style="left:383px;top:361px;font-size:10.2px">Immissione</div>
<div class="t" style="left:443px;top:358px;font-size:10.5px">Misure</div>
<div class="t" style="left:483px;top:360px;font-size:10.5px">Altri Dati</div>
<div class="t" style="left:390px;top:387px;font-size:10.4px">Codice Immissione :</div>
<div class="inp" style="left:486px;top:383px;width:100px;height:20px;padding-left:6px;line-height:19px">1. 1. 1. 1</div>
<div class="t" style="left:599px;top:387px;font-size:10.55px">Classe di prezzo :</div>
<div class="a" style="left:686px;top:383px;width:80px;height:20px;border:1px solid #c9c9c9;border-radius:2px;background:#f4f4f4"></div>
<div class="t" style="left:689px;top:387px;font-size:10.5px;color:#8d8d8d">Prezzo V...</div>
<svg style="left:753px;top:391px" width="8" height="5" viewBox="0 0 8 5"><path d="M0 0.5h7.5L3.75 4.5z" fill="#a8a8a8"/></svg>
<div class="fld" style="left:769px;top:383px;width:80px;height:20px">10,02</div>
<div class="t" style="left:855px;top:386px;font-size:10.7px">Importo :</div>
<div class="fld" style="left:905px;top:383px;width:80px;height:20px">79.284,88</div>
<div class="a" style="left:990px;top:387px;width:13px;height:13px;border:1px solid #8e8f8f;background:linear-gradient(135deg,#dcdcdc,#fff)"></div>
<div class="t" style="left:1005px;top:387px;font-size:11px">O.S. Aggiuntivo</div>
<div class="t" style="left:410px;top:411px;font-size:10.5px;color:#1e7de6;text-decoration:underline">Codice E.P.U.</div>
<div class="t" style="left:480px;top:410px;font-size:11px">:</div>
<div class="inp" style="left:486px;top:407px;width:100px;height:20px;padding-left:3px;line-height:19px">1.1</div>
<div class="a" style="left:591px;top:410px;width:14px;height:14px;border:1px solid #5d6f8a;border-radius:2px;background:linear-gradient(#fafbfc,#e6e9ee)"></div>
<svg style="left:594px;top:415px" width="8" height="5" viewBox="0 0 8 5"><path d="M0 0.5h7.5L3.75 4.5z" fill="#6e8fc0"/></svg>
<div class="t" style="left:634px;top:410px;font-size:10.6px">Quantità :</div>
<div class="fld" style="left:686px;top:407px;width:80px;height:20px">7.912,663</div>
<div class="fld" style="left:769px;top:407px;width:50px;height:20px">mc</div>
<div class="panel" style="left:382px;top:432px;width:1277px;height:476px"></div>
<div class="gc" style="left:383px;top:433px;width:1275px;height:19px"></div>
<div class="a" style="left:383px;top:433px;width:660px;height:19px;background:linear-gradient(#fdfdfd 0,#f7f7f7 40%,#ebebeb 100%);border-bottom:1px solid #d5d5d5"></div>
<div class="gc" style="left:383px;top:452px;width:44px;height:456px"></div>
<div class="a" style="left:404px;top:433px;width:1px;height:19px;background:#e4e4e4"></div>
<div class="a" style="left:426px;top:433px;width:1px;height:19px;background:#e4e4e4"></div>
<div class="gl" style="left:686px;top:433px;height:458px"></div>
<div class="gl" style="left:752px;top:433px;height:458px"></div>
<div class="gl" style="left:816px;top:433px;height:458px"></div>
<div class="gl" style="left:889px;top:433px;height:458px"></div>
<div class="gl" style="left:957px;top:433px;height:458px"></div>
<div class="gl" style="left:1042px;top:433px;height:458px"></div>
<svg style="left:388px;top:434px" width="12" height="16" viewBox="0 0 12 16"><path d="M1.3 1v12.3l3-3 2.4 4.6 1.8-0.9-2.3-4.4h4.3z" fill="#fff" stroke="#4f6490" stroke-width="1"/></svg>
<svg style="left:410px;top:437px" width="11" height="11" viewBox="0 0 11 11"><path d="M5.35 1v9M0.9 5.4h8.9" stroke="#4fd24f" stroke-width="3"/></svg>
<div class="t" style="left:427px;top:436px;width:259px;text-align:center;font-size:10.35px">Descrizione Immissione</div>
<div class="t" style="left:686px;top:436px;width:66px;text-align:center;font-size:10.35px">Parti Simili</div>
<div class="t" style="left:752px;top:436px;width:64px;text-align:center;font-size:10.35px">Lunghezza</div>
<div class="t" style="left:816px;top:436px;width:73px;text-align:center;font-size:10.35px">Larghezza</div>
<div class="t" style="left:889px;top:436px;width:68px;text-align:center;font-size:10.35px">Altezza/Peso</div>
<div class="t" style="left:957px;top:436px;width:85px;text-align:center;font-size:10.35px">Totale</div>
<div class="gc" style="left:958px;top:452px;width:84px;height:114px"></div>
<div class="gc" style="left:687px;top:490px;width:270px;height:19px"></div>
<div class="gl" style="left:686px;top:452px;height:439px"></div>
<div class="gl" style="left:752px;top:452px;height:439px"></div>
<div class="gl" style="left:816px;top:452px;height:439px"></div>
<div class="gl" style="left:889px;top:452px;height:439px"></div>
<div class="gl" style="left:957px;top:452px;height:439px"></div>
<div class="gl" style="left:1042px;top:452px;height:439px"></div>
<div class="t" style="left:394px;top:453px;font-size:11px">1</div>
<div class="t" style="left:427px;top:453px;font-size:11px">lato nord</div>
<div class="t" style="left:688px;top:453px;font-size:11px">2</div>
<div class="t" style="left:754px;top:453px;font-size:11px">23</div>
<div class="t" style="left:818px;top:453px;font-size:11px">2</div>
<div class="t" style="left:891px;top:453px;font-size:11px">3</div>
<div class="t r" style="left:950px;top:453px;width:91px;font-size:11.1px">276,000</div>
<div class="dl" style="left:383px;top:471px;width:1258px"></div>
<div class="t" style="left:394px;top:472px;font-size:11px">2</div>
<div class="t" style="left:427px;top:472px;font-size:11px">lato sud</div>
<div class="t" style="left:688px;top:472px;font-size:11px">((2+3)/4)*3</div>
<div class="t" style="left:754px;top:472px;font-size:11px">45</div>
<div class="t" style="left:818px;top:472px;font-size:11px">5</div>
<div class="t" style="left:891px;top:472px;font-size:11px">1,03</div>
<div class="t r" style="left:950px;top:472px;width:91px;font-size:11.1px">869,063</div>
<div class="dl" style="left:383px;top:490px;width:1258px"></div>
<div class="t" style="left:394px;top:491px;font-size:11px">3</div>
<div class="t" style="left:427px;top:491px;font-size:11px;color:#0000ee">Parziale</div>
<div class="t r" style="left:950px;top:491px;width:91px;font-size:11.1px;color:#0000ee">1.145,063</div>
<div class="dl" style="left:383px;top:509px;width:1258px"></div>
<div class="t" style="left:394px;top:510px;font-size:11px">4</div>
<div class="t" style="left:427px;top:510px;font-size:11px">lato est</div>
<div class="t" style="left:754px;top:510px;font-size:11px">54</div>
<div class="t" style="left:818px;top:510px;font-size:11px">45</div>
<div class="t" style="left:891px;top:510px;font-size:11px">1,8</div>
<div class="t r" style="left:950px;top:510px;width:91px;font-size:11.1px">4.374,000</div>
<div class="dl" style="left:383px;top:528px;width:1258px"></div>
<div class="t" style="left:394px;top:529px;font-size:11px">5</div>
<div class="t" style="left:427px;top:529px;font-size:11px">lato ovest</div>
<div class="t" style="left:688px;top:529px;font-size:11px">4</div>
<div class="t" style="left:754px;top:529px;font-size:11px">24</div>
<div class="t" style="left:818px;top:529px;font-size:11px">32</div>
<div class="t" style="left:891px;top:529px;font-size:11px">0,8</div>
<div class="t r" style="left:950px;top:529px;width:91px;font-size:11.1px">2.457,600</div>
<div class="dl" style="left:383px;top:547px;width:1258px"></div>
<div class="t" style="left:394px;top:548px;font-size:11px">6</div>
<div class="t" style="left:427px;top:548px;font-size:11px;color:#ee1111">da non demolire</div>
<div class="t" style="left:688px;top:548px;font-size:11px;color:#ee1111">4</div>
<div class="t" style="left:754px;top:548px;font-size:11px;color:#ee1111">4</div>
<div class="t" style="left:818px;top:548px;font-size:11px;color:#ee1111">4</div>
<div class="t r" style="left:950px;top:548px;width:91px;font-size:11.1px;color:#ee1111">-64,000</div>
<div class="dl" style="left:383px;top:566px;width:1258px"></div>
<div class="a" style="left:407px;top:555px;width:7px;height:2px;background:#f08a2a"></div>
<div class="a" style="left:1642px;top:452px;width:16px;height:439px;background:linear-gradient(90deg,#e8e8e8,#f0f0f0 30%,#f0f0f0)"></div>
<svg style="left:1646px;top:458px" width="9" height="6" viewBox="0 0 9 6"><path d="M0.5 5L4.5 1 8.5 5z" fill="#606060"/></svg>
<svg style="left:1646px;top:880px" width="9" height="6" viewBox="0 0 9 6"><path d="M0.5 1L4.5 5 8.5 1z" fill="#8a8a8a"/></svg>
<div class="a" style="left:427px;top:891px;width:1214px;height:16px;background:linear-gradient(#e6e6e6,#f0f0f0 30%,#f0f0f0)"></div>
<svg style="left:432px;top:895px" width="6" height="9" viewBox="0 0 6 9"><path d="M5 0.5L1 4.5 5 8.5z" fill="#333"/></svg>
<svg style="left:1630px;top:895px" width="6" height="9" viewBox="0 0 6 9"><path d="M1 0.5L5 4.5 1 8.5z" fill="#333"/></svg>
<div class="a" style="left:445px;top:892px;width:773px;height:15px;border:1px solid #9a9a9a;border-radius:2px;background:linear-gradient(#f4f4f4 0,#e4e4e4 50%,#d0d0d0 100%)"></div>
<svg style="left:826px;top:896px" width="8" height="8" viewBox="0 0 8 8"><path d="M1 0.5v7M3.5 0.5v7M6 0.5v7" stroke="#555" stroke-width="1"/></svg>
<div class="a" style="left:8px;top:918px;width:1660px;height:1px;background:#9d9d9d"></div>
<div class="a" style="left:8px;top:919px;width:1660px;height:20px;background:#efefef"></div>
<div class="a" style="left:1304px;top:921px;width:151px;height:18px;border-top:1px solid #a0a0a0;border-left:1px solid #a0a0a0;background:#efefef"></div>
<div class="a" style="left:1459px;top:921px;width:191px;height:18px;border-top:1px solid #a0a0a0;border-left:1px solid #a0a0a0;background:#efefef"></div>
<div class="t" style="left:1306px;top:924px;font-size:10.4px">Numero immissioni : 37</div>
<div class="t" style="left:1462px;top:924px;font-size:10.8px">Totale Computo : 577.702,37</div>
<svg style="left:1656px;top:926px" width="12" height="12" viewBox="0 0 12 12"><g fill="#b5b5b5"><rect x="9" y="1" width="1.5" height="1.5"/><rect x="6" y="4" width="1.5" height="1.5"/><rect x="9" y="4" width="1.5" height="1.5"/><rect x="3" y="7" width="1.5" height="1.5"/><rect x="6" y="7" width="1.5" height="1.5"/><rect x="9" y="7" width="1.5" height="1.5"/></g></svg>
</body></html>
